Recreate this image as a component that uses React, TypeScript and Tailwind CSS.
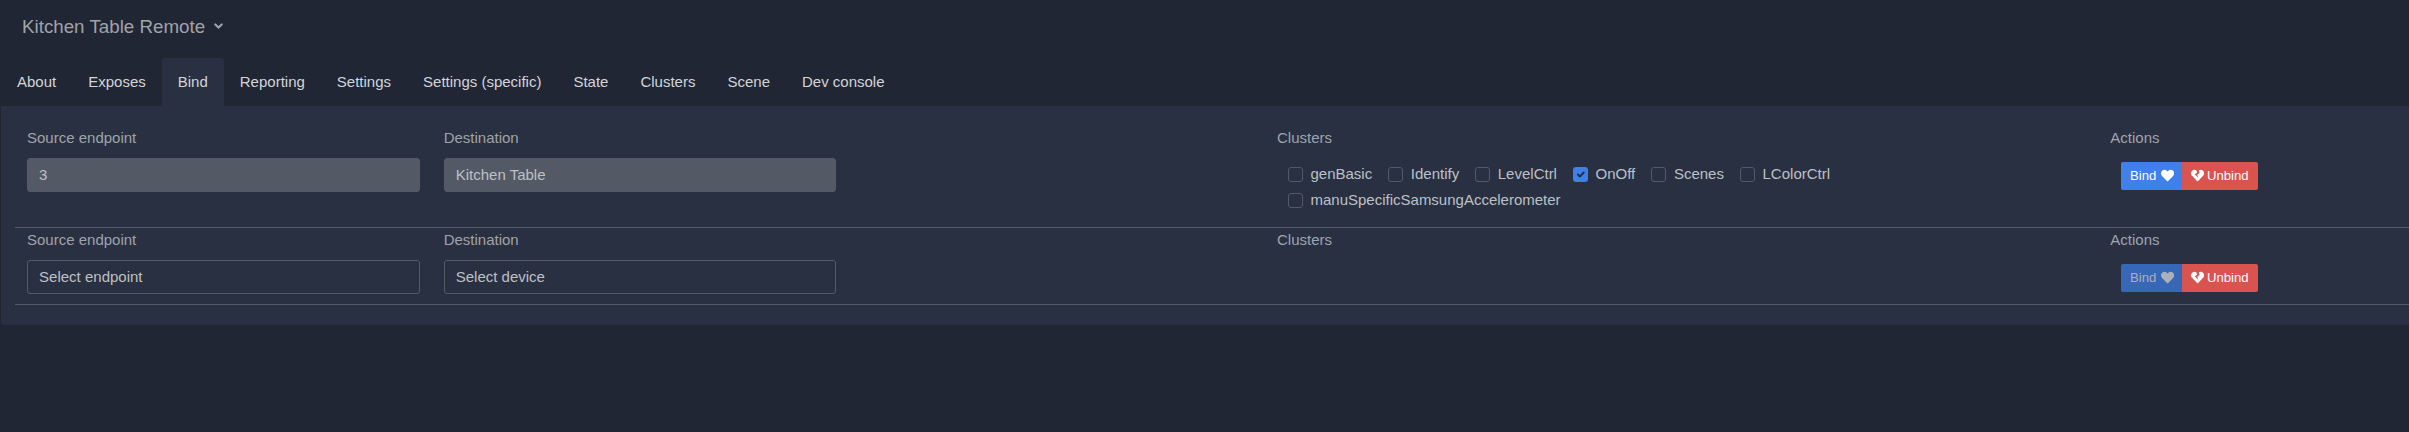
import { FaHeart, FaHeartBroken } from "react-icons/fa";

const TABS = ["About", "Exposes", "Bind", "Reporting", "Settings", "Settings (specific)", "State", "Clusters", "Scene", "Dev console"];

type Cluster = { name: string; checked?: boolean };

const CLUSTERS: Cluster[] = [
  { name: "genBasic" },
  { name: "Identify" },
  { name: "LevelCtrl" },
  { name: "OnOff", checked: true },
  { name: "Scenes" },
  { name: "LColorCtrl" },
  { name: "manuSpecificSamsungAccelerometer" },
];

function Tab({ label, active }: { label: string; active: boolean }) {
  return (
    <a
      className={
        active
          ? "rounded-t-[3px] bg-[#293042] px-4 pt-[13px] pb-[12.5px] text-[#d3d5d9]"
          : "px-4 pt-[13px] pb-[12.5px] text-[#d3d5d9]"
      }
    >
      {label}
    </a>
  );
}

function Field({ label, value, disabled }: { label: string; value: string; disabled?: boolean }) {
  return (
    <div className="px-3">
      <div className="mb-2 h-6 pt-px">{label}</div>
      <div
        className={
          disabled
            ? "h-[34px] rounded-[3px] border border-[#545966] bg-[#545966] px-[11.1px] pt-[5px] text-[#bdc0c5]"
            : "h-[34px] rounded-[3px] border border-[#545966] px-[11.1px] pt-[5px] text-[#bdc0c5]"
        }
      >
        {value}
      </div>
    </div>
  );
}

function Checkbox({ name, checked }: Cluster) {
  return (
    <label className="mr-[16.1px] flex h-[26px] items-start text-[#bdc0c5]">
      <span
        className={
          checked
            ? "mt-[4.5px] mr-[7.5px] size-[15px] shrink-0 rounded-[3px] bg-[#3f80ea] p-px"
            : "mt-[4.5px] mr-[7.5px] size-[15px] shrink-0 rounded-[3px] border border-[#545966]"
        }
      >
        {checked && (
          <svg viewBox="0 0 20 20" className="size-[13px]" fill="none" stroke="#293042" strokeWidth="3" strokeLinecap="round" strokeLinejoin="round">
            <path d="M6 10l3 3 6-6" />
          </svg>
        )}
      </span>
      {name}
    </label>
  );
}

function Actions({ bindDisabled }: { bindDisabled?: boolean }) {
  return (
    <div className="px-3">
      <div className="h-6 pt-px">Actions</div>
      <div className="mt-3 ml-[10.7px] flex h-7 text-[13.125px] leading-[27px] text-white">
        <button
          className={
            bindDisabled
              ? "flex w-[61px] items-start gap-[4.2px] rounded-l-[2px] bg-[#3768b8] pl-[9.1px] text-[#acb0b8]"
              : "flex w-[61px] items-start gap-[4.2px] rounded-l-[2px] bg-[#3f80ea] pl-[9.1px]"
          }
        >
          Bind
          <FaHeart className="mt-[6.8px] shrink-0" />
        </button>
        <button className="flex w-[76px] items-start gap-[3.3px] rounded-r-[2px] bg-[#d9534f] pl-[8.6px]">
          <FaHeartBroken className="mt-[6.8px] shrink-0" />
          Unbind
        </button>
      </div>
    </div>
  );
}

type RowProps = { endpoint: string; device: string; bound?: boolean };

function BindRow({ endpoint, device, bound }: RowProps) {
  return (
    <div
      className={
        bound
          ? "grid h-[102px] w-[2500px] grid-cols-6 border-b border-[#545966]"
          : "grid h-[77px] w-[2500px] grid-cols-6 border-b border-[#545966]"
      }
    >
      <Field label="Source endpoint" value={endpoint} disabled={bound} />
      <Field label="Destination" value={device} disabled={bound} />
      <div className="col-span-2 col-start-4 px-3">
        <div className="h-6 pt-px">Clusters</div>
        {bound && (
          <div className="mt-[12.5px] ml-[11px] flex flex-wrap">
            {CLUSTERS.map((c) => (
              <Checkbox key={c.name} {...c} />
            ))}
          </div>
        )}
      </div>
      <Actions bindDisabled={!bound} />
    </div>
  );
}

export default function App() {
  return (
    <div className="h-[432px] w-full overflow-hidden bg-[#202634] pl-px font-['Liberation_Sans',Arial,sans-serif] text-[15px] leading-[22.5px] text-[#a0a3a9]">
      <header className="flex h-[58px] items-start pt-[13px] pl-[21px] text-[18.75px] leading-[28px]">
        <h1 className="w-[191.5px]">Kitchen Table Remote</h1>
        <svg viewBox="0 0 9 6" className="mt-[10.3px] h-[6px] w-[9px] overflow-visible" fill="none" stroke="currentColor" strokeWidth="2.1" strokeLinecap="round">
          <path d="M1.3 1.4l3.2 3.1 3.2-3.1" />
        </svg>
      </header>
      <nav className="flex h-12">
        {TABS.map((t) => (
          <Tab key={t} label={t} active={t === "Bind"} />
        ))}
      </nav>
      <main className="h-[219px] overflow-hidden rounded-bl-[3px] bg-[#293042] pt-5 pl-[14px]">
        <BindRow endpoint="3" device="Kitchen Table" bound />
        <BindRow endpoint="Select endpoint" device="Select device" />
      </main>
    </div>
  );
}
